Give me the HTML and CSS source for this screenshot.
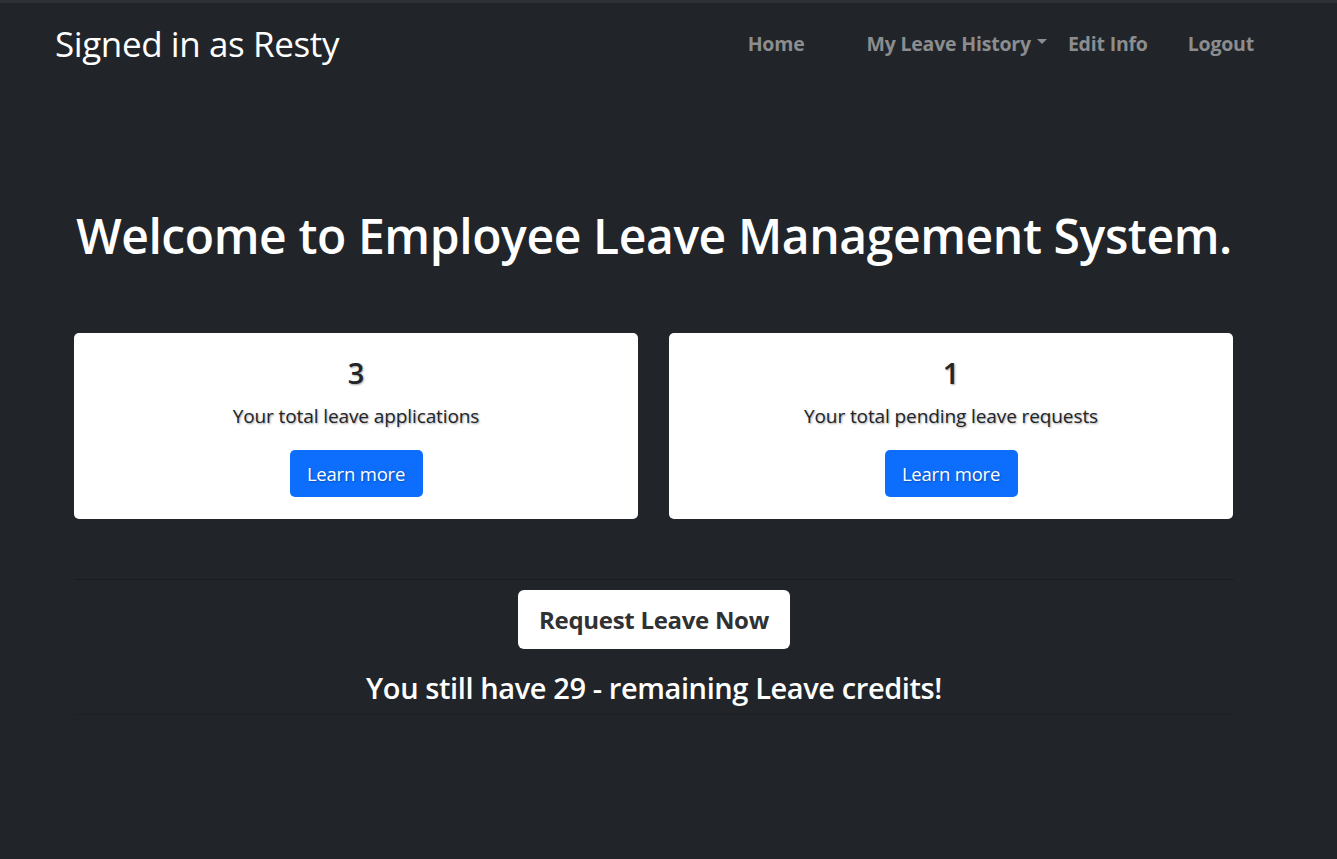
FILE: index.html
```html
<!DOCTYPE html>
<html lang="en">
<head>
<meta charset="utf-8">
<title>Employee Leave Management System</title>
<link rel="stylesheet" href="styles.css">
</head>
<body>
<nav class="navbar">
  <a class="brand" href="#">Signed in as Resty</a>
  <ul class="nav-links">
    <li class="nav-home"><a href="#">Home</a></li>
    <li class="nav-history"><a href="#">My Leave History<span class="caret"></span></a></li>
    <li class="nav-edit"><a href="#">Edit Info</a></li>
    <li class="nav-logout"><a href="#">Logout</a></li>
  </ul>
</nav>
<main class="container">
  <h1 class="title">Welcome to Employee Leave Management System.</h1>
  <div class="cards">
    <div class="card">
      <div class="count">3</div>
      <p class="label">Your total leave applications</p>
      <a class="btn-primary" href="#">Learn more</a>
    </div>
    <div class="card">
      <div class="count">1</div>
      <p class="label">Your total pending leave requests</p>
      <a class="btn-primary" href="#">Learn more</a>
    </div>
  </div>
  <section class="request">
    <a class="btn-light" href="#">Request Leave Now</a>
    <p class="credits">You still have 29 - remaining Leave credits!</p>
  </section>
</main>
</body>
</html>
```

FILE: styles.css
```css
* { box-sizing: border-box; }
html { background: #212529; }
html, body { margin: 0; padding: 0; }
body {
  background: #212529;
  border-top: 3px solid #2e3236;
  font-family: "Open Sans", "Noto Sans", sans-serif;
  color: #fff;
}
a { text-decoration: none; }

.navbar {
  display: flex;
  align-items: center;
  justify-content: space-between;
  height: 85px;
  padding: 0 83px 0 55px;
}
.brand {
  color: #fff;
  font-size: 35px;
  font-weight: 500;
  letter-spacing: -0.4px;
  line-height: 1;
  margin-top: -4px;
}
.nav-links {
  display: flex;
  list-style: none;
  margin: 0;
  padding: 0;
  align-items: center;
  margin-top: -4px;
}
.nav-links a {
  color: #8c8d8f;
  font-weight: 700;
  font-size: 19.5px;
  letter-spacing: -0.2px;
  display: inline-flex;
  align-items: center;
}
.nav-home { margin-right: 62px; }
.nav-history { margin-right: 21px; }
.nav-edit { margin-right: 40px; }
.caret {
  display: inline-block;
  width: 0;
  height: 0;
  margin-left: 6px;
  border-left: 5px solid transparent;
  border-right: 5px solid transparent;
  border-top: 5px solid #8c8d8f;
  margin-top: -4px;
}

.container {
  width: 1160px;
  margin: 0 0 0 74px;
  padding-top: 116px;
}
.title {
  margin: 0;
  text-align: center;
  font-size: 48px;
  font-weight: 600;
  letter-spacing: -0.4px;
  line-height: 64px;
}
.cards {
  display: grid;
  grid-template-columns: 564px 564px;
  column-gap: 31px;
  margin-top: 65px;
}
.card {
  background: #fff;
  border-radius: 5px;
  height: 186px;
  display: flex;
  flex-direction: column;
  align-items: center;
  padding-top: 22px;
  color: #212529;
  text-shadow: 1px 1px 2px rgba(0,0,0,0.35);
}
.count {
  font-size: 29px;
  font-weight: 600;
  line-height: 36px;
}
.label {
  margin: 12px 0 0;
  font-size: 19px;
  line-height: 26px;
  letter-spacing: -0.1px;
}
.btn-primary {
  margin-top: 21px;
  background: #0d6efd;
  color: #fff;
  border-radius: 5px;
  width: 133px;
  height: 47px;
  display: flex;
  align-items: center;
  justify-content: center;
  font-size: 18.5px;
  letter-spacing: -0.2px;
  text-shadow: 1px 1px 2px rgba(0,0,0,0.3);
}

.request {
  margin-top: 60px;
  border-top: 1px solid #1a1d20;
  border-bottom: 1px solid #1e2124;
  display: flex;
  flex-direction: column;
  align-items: center;
  padding-top: 10px;
  height: 136px;
}
.btn-light {
  background: #fff;
  color: #2f3133;
  border-radius: 6px;
  width: 272px;
  height: 59px;
  display: flex;
  align-items: center;
  justify-content: center;
  font-size: 24px;
  font-weight: 700;
  letter-spacing: -0.3px;
}
.credits {
  margin: 20px 0 0;
  font-size: 29px;
  font-weight: 600;
  letter-spacing: -0.4px;
  line-height: 38px;
}
```
